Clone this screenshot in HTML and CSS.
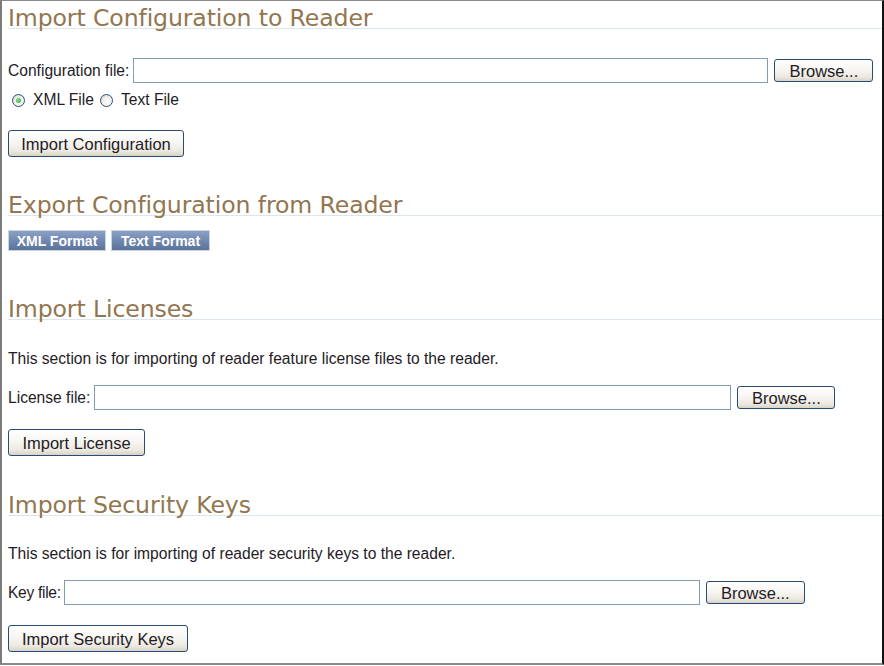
FILE: index.html
```html
<!DOCTYPE html>
<html>
<head>
<meta charset="utf-8">
<link rel="stylesheet" href="styles.css">
</head>
<body>
<div class="frame">
  <section class="sec sec-import">
    <h2 class="title">Import Configuration to Reader</h2>
    <div class="file-row row-config">
      <label class="lbl">Configuration file:</label>
      <input class="file-input w-config" type="text">
      <button class="btn browse">Browse...</button>
    </div>
    <div class="radio-row">
      <span class="radio checked"></span><span class="rlabel">XML File</span>
      <span class="radio"></span><span class="rlabel">Text File</span>
    </div>
    <button class="btn action btn-config">Import Configuration</button>
  </section>

  <section class="sec sec-export">
    <h2 class="title">Export Configuration from Reader</h2>
    <div class="export-row">
      <button class="xbtn x-xml">XML Format</button>
      <button class="xbtn x-txt">Text Format</button>
    </div>
  </section>

  <section class="sec sec-lic">
    <h2 class="title">Import Licenses</h2>
    <p class="desc">This section is for importing of reader feature license files to the reader.</p>
    <div class="file-row">
      <label class="lbl">License file:</label>
      <input class="file-input w-lic" type="text">
      <button class="btn browse b98">Browse...</button>
    </div>
    <button class="btn action btn-lic">Import License</button>
  </section>

  <section class="sec sec-keys">
    <h2 class="title">Import Security Keys</h2>
    <p class="desc">This section is for importing of reader security keys to the reader.</p>
    <div class="file-row row-key">
      <label class="lbl lbl-key">Key file:</label>
      <input class="file-input w-key" type="text">
      <button class="btn browse">Browse...</button>
    </div>
    <button class="btn action btn-keys">Import Security Keys</button>
  </section>
</div>
</body>
</html>
```

FILE: styles.css
```css
html, body {
  margin: 0;
  padding: 0;
  background: #ffffff;
}
.frame {
  box-sizing: border-box;
  width: 884px;
  height: 665px;
  border-left: 2px solid #7b7b7b;
  border-top: 1px solid #8c8c8c;
  border-right: 2px solid #111111;
  border-bottom: 2px solid #8a8a8a;
  padding: 0 0 0 6px;
  font-family: "Liberation Sans", Arial, sans-serif;
  font-size: 15.6px;
  color: #241b26;
  overflow: hidden;
}
.title {
  margin: 0;
  font-family: "DejaVu Sans", Verdana, sans-serif;
  font-weight: normal;
  font-size: 23.6px;
  letter-spacing: -0.12px;
  color: #927650;
  line-height: 20px;
  height: 20px;
  border-bottom: 1px solid #dbe7ee;
  white-space: nowrap;
}
.sec-import .title { margin-top: 7px; }
.sec-export .title { margin-top: 38px; }
.sec-lic .title { margin-top: 48px; }
.sec-keys .title { margin-top: 39px; }

.file-row {
  display: flex;
  align-items: center;
  height: 25px;
  margin-top: 18px;
}
.row-config { margin-top: 29px; }
.row-key { margin-top: 18px; }
.lbl {
  margin-right: 4px;
  line-height: 16px;
  white-space: nowrap;
}
.lbl-key { margin-right: 3px; letter-spacing: -0.3px; }
.file-input {
  box-sizing: border-box;
  height: 25px;
  border: 1px solid #7f9db9;
  background: #fff;
  margin: 0 6px 0 0;
  padding: 0;
  flex: none;
}
.w-config { width: 635px; }
.w-lic { width: 637px; }
.w-key { width: 636px; }

.btn {
  box-sizing: border-box;
  font-family: "Liberation Sans", Arial, sans-serif;
  font-size: 16.5px;
  color: #241b26;
  border: 1px solid #2b4c72;
  border-radius: 3px;
  background: linear-gradient(#ffffff 0%, #f7f6f2 45%, #ece9e1 80%, #d8d3c7 100%);
  padding: 0;
  margin: 0;
  flex: none;
}
.browse {
  width: 99px;
  height: 23px;
  line-height: 20px;
}
.browse.b98 { width: 98px; }
.radio-row {
  display: flex;
  align-items: center;
  margin-top: 9px;
  padding-left: 4px;
  height: 16px;
}
.radio {
  box-sizing: border-box;
  width: 13px;
  height: 13px;
  border-radius: 50%;
  border: 1px solid #27517a;
  background: radial-gradient(circle at 60% 65%, #ffffff 0%, #f3f2ee 40%, #d4d2ca 100%);
  margin-right: 8px;
  position: relative;
  flex: none;
}
.radio.checked::after {
  content: "";
  position: absolute;
  left: 3px;
  top: 3px;
  width: 5px;
  height: 5px;
  border-radius: 50%;
  background: radial-gradient(circle at 40% 40%, #8ee08e, #22a022);
}
.rlabel { margin-right: 6px; line-height: 16px; }

.action {
  display: block;
  height: 27px;
  line-height: 24px;
}
.btn-config { margin-top: 22px; width: 176px; }
.btn-lic { margin-top: 19px; width: 137px; }
.btn-keys { margin-top: 20px; width: 180px; }

.export-row {
  display: flex;
  gap: 5px;
  margin-top: 14px;
}
.xbtn {
  box-sizing: border-box;
  height: 21px;
  border: 1px solid #c9d3e1;
  background: linear-gradient(#8ba0c4 0%, #7189b0 50%, #5b7299 100%);
  color: #ffffff;
  font-family: "Liberation Sans", Arial, sans-serif;
  font-weight: bold;
  font-size: 14px;
  padding: 0;
  margin: 0;
  line-height: 18px;
}
.x-xml { width: 98px; }
.x-txt { width: 99px; }
.desc {
  margin: 31px 0 0 0;
  line-height: 16px;
}
.sec-keys .desc { margin-top: 30px; }
```
